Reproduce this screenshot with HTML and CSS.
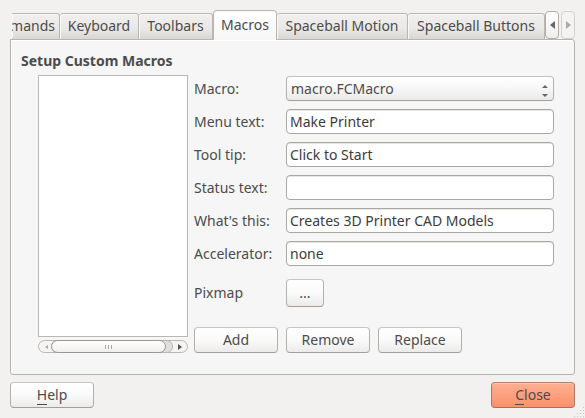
FILE: index.html
```html
<!DOCTYPE html>
<html lang="en">
<head>
<meta charset="utf-8">
<title>Customize</title>
<link rel="stylesheet" href="styles.css">
</head>
<body>
<main class="dialog">
  <div class="tabbar">
    <div class="tabs" role="tablist">
      <button class="tab tab-cut" role="tab" type="button">mands</button>
      <button class="tab" role="tab" type="button">Keyboard</button>
      <button class="tab" role="tab" type="button">Toolbars</button>
      <button class="tab tab-active" role="tab" type="button" aria-selected="true">Macros</button>
      <button class="tab" role="tab" type="button">Spaceball Motion</button>
      <button class="tab" role="tab" type="button">Spaceball Buttons</button>
      <svg class="tear" width="4" height="26" viewBox="0 0 4 26" aria-hidden="true"><path d="M0 0H1L3 5L1 9L3 14L1 18L3 22L1 26H0Z" fill="#f2f1f0"/><path d="M1 0L3 5L1 9L3 14L1 18L3 22L1 26" fill="none" stroke="#fff"/></svg>
    </div>
    <button class="scroller" type="button" aria-label="Scroll tabs left"><svg width="5" height="8" viewBox="0 0 5 8"><path d="M5 0V8L0 4Z" fill="#666"/></svg></button>
    <button class="scroller" type="button" aria-label="Scroll tabs right" disabled><svg width="5" height="8" viewBox="0 0 5 8"><path d="M0 0V8L5 4Z" fill="#aaa"/></svg></button>
  </div>

  <section class="pane">
    <h1 class="heading">Setup Custom Macros</h1>
    <div class="content">
      <div class="list-column">
        <div class="list" role="listbox" aria-label="Macros"></div>
        <div class="scrollbar">
          <svg class="arrow-left" width="3" height="4" viewBox="0 0 3 4"><path d="M3 0V4L0 2Z" fill="#aaa"/></svg>
          <div class="groove"><div class="thumb"><i></i><i></i><i></i></div></div>
          <svg class="arrow-right" width="4" height="6" viewBox="0 0 4 6"><path d="M0 0V6L4 3Z" fill="#555"/></svg>
        </div>
      </div>
      <form class="form">
        <div class="fields">
          <label for="macro">Macro:</label>
          <div class="combo">
            <select id="macro" class="field select"><option>macro.FCMacro</option></select>
            <svg class="combo-arrows" width="6" height="12" viewBox="0 0 6 12"><path d="M0 3L3 0L6 3ZM0 9H6L3 12Z" fill="#666"/></svg>
          </div>
          <label for="menu">Menu text:</label>
          <input id="menu" class="field" type="text" value="Make Printer">
          <label for="tip">Tool tip:</label>
          <input id="tip" class="field" type="text" value="Click to Start">
          <label for="status">Status text:</label>
          <input id="status" class="field" type="text">
          <label for="whats">What's this:</label>
          <input id="whats" class="field" type="text" value="Creates 3D Printer CAD Models">
          <label for="accel">Accelerator:</label>
          <input id="accel" class="field" type="text" value="none">
        </div>
        <div class="pixmap">
          <label for="pixmap">Pixmap</label>
          <button id="pixmap" class="button button-browse" type="button">...</button>
        </div>
        <div class="actions">
          <button class="button" type="button">Add</button>
          <button class="button" type="button">Remove</button>
          <button class="button" type="button">Replace</button>
        </div>
      </form>
    </div>
  </section>

  <footer class="footer">
    <button class="button" type="button"><span class="key">H</span>elp</button>
    <button class="button button-close" type="button"><span class="key">C</span>lose</button>
  </footer>
</main>
<svg class="grip" width="12" height="12" viewBox="0 0 12 12" aria-hidden="true"><path d="M10 1h1v1h-1zM7 4h1v1h-1zM10 4h1v1h-1zM4 7h1v1h-1zM7 7h1v1h-1zM10 7h1v1h-1zM1 10h1v1h-1zM4 10h1v1h-1zM7 10h1v1h-1zM10 10h1v1h-1z" fill="#c4c2bf"/></svg>
</body>
</html>
```
FILE: styles.css
```css
* { box-sizing: border-box; }
body {
  margin: 0;
  background: #f2f1f0;
  color: #4c4c4c;
  font: 14px/20px "Noto Sans", "Open Sans", sans-serif;
}
button, input, select { font: inherit; color: inherit; margin: 0; }
.dialog { padding: 10px; }

.tabbar { display: flex; align-items: flex-end; height: 30px; }
.tabs {
  flex: 1;
  position: relative;
  display: grid;
  grid-template-columns: 50px 79px 74px 64px 131px 1fr;
  align-items: end;
}
.tab {
  height: 27px;
  padding: 0 0 1px;
  display: flex;
  align-items: center;
  justify-content: center;
  white-space: nowrap;
  border: 1px solid #bab7b3;
  border-left-width: 0;
  border-radius: 3px 3px 0 0;
  background: linear-gradient(#f1f0ef, #e9e8e6 60%, #d9d7d4);
  box-shadow: inset 1px 1px #f8f8f8;
}
.tab-cut { justify-content: flex-end; padding-right: 4px; }
.tab-active {
  height: 30px;
  border-left-width: 1px;
  border-bottom-width: 0;
  border-radius: 4px 4px 0 0;
  background: linear-gradient(#fff, #f6f6f6);
  z-index: 1;
}
.tear { position: absolute; left: 0; bottom: 1px; }
.scroller {
  width: 14px;
  height: 28px;
  margin-bottom: 1px;
  padding: 0;
  display: flex;
  align-items: center;
  justify-content: center;
  border: 1px solid #b0adaa;
  border-radius: 4px;
  background: linear-gradient(#fff, #efeeed);
}
.scroller + .scroller { margin-left: 2px; }
.scroller:disabled { border-color: #d3d1cf; background: #f4f3f2; }

.pane {
  margin-top: -1px;
  padding: 11px 20px 21px 10px;
  border: 1px solid #b6b3af;
  border-radius: 0 3px 3px 3px;
  background: #f6f6f6;
  box-shadow: inset 1px 1px #fff;
}
.heading { margin: 0 0 4px; font-size: 14px; line-height: 20px; font-weight: 700; }
.content { display: grid; grid-template-columns: 150px 1fr; gap: 6px; margin-left: 17px; }
.list-column { display: flex; flex-direction: column; gap: 3px; }
.list { flex: 1; border: 1px solid #b9b6b3; background: #fff; }
.scrollbar {
  height: 13px;
  display: flex;
  align-items: center;
  justify-content: space-between;
  padding: 0 5px 0 6px;
  border: 1px solid #b9b6b3;
  border-radius: 7px;
  background: #f5f4f3;
}
.groove {
  flex: 1;
  height: 13px;
  margin: 0 5px 0 3px;
  padding-right: 6px;
  border: 1px solid #b9b6b3;
  border-left: 0;
  border-radius: 7px;
  background: #e0dfdd;
}
.thumb {
  height: 13px;
  margin-top: -1px;
  display: flex;
  align-items: center;
  justify-content: center;
  gap: 2px;
  border: 1px solid #999693;
  border-radius: 7px;
  background: linear-gradient(#fff, #efeeed);
}
.thumb i { width: 1px; height: 4px; background: #aaa; }

.form { padding-top: 1px; }
.fields, .pixmap { display: grid; grid-template-columns: 86px 1fr; gap: 8px 6px; align-items: center; }
.field {
  display: block;
  width: 100%;
  height: 25px;
  padding: 0 3px;
  border: 1px solid #aaa6a2;
  border-radius: 4px;
  background: #fff;
  color: #3c3c3c;
  box-shadow: inset 0 1px #e8e7e6;
}
.combo { position: relative; }
.select {
  appearance: none;
  padding: 0 20px 0 4px;
  color: #4c4c4c;
  border-color: #c4c2c0 #b3b0ad #a19e9b;
  background: linear-gradient(#fff, #f7f7f7 50%, #ebeae9);
  box-shadow: none;
}
.combo-arrows { position: absolute; right: 6px; top: 9px; }
.pixmap { margin-top: 13px; }

.button {
  width: 84px;
  height: 26px;
  padding: 0;
  border: 1px solid;
  border-color: #c8c6c4 #b3b0ad #a19e9b;
  border-radius: 4px;
  background: linear-gradient(#fff, #fafafa 50%, #ecebea);
}
.button-browse { width: 38px; height: 28px; }
.actions { display: flex; gap: 8px; margin-top: 20px; }
.footer { display: flex; justify-content: space-between; margin-top: 7px; }
.button-close {
  border-color: #bd7f69 #b17763 #a5705d;
  background: linear-gradient(#ffaf91, #f8926b);
  box-shadow: inset 0 1px #ffc2aa;
}
.key { display: inline-block; line-height: 18px; box-shadow: 0 1px #4c4c4c; }
.grip { position: fixed; right: 0; bottom: 0; }
```
